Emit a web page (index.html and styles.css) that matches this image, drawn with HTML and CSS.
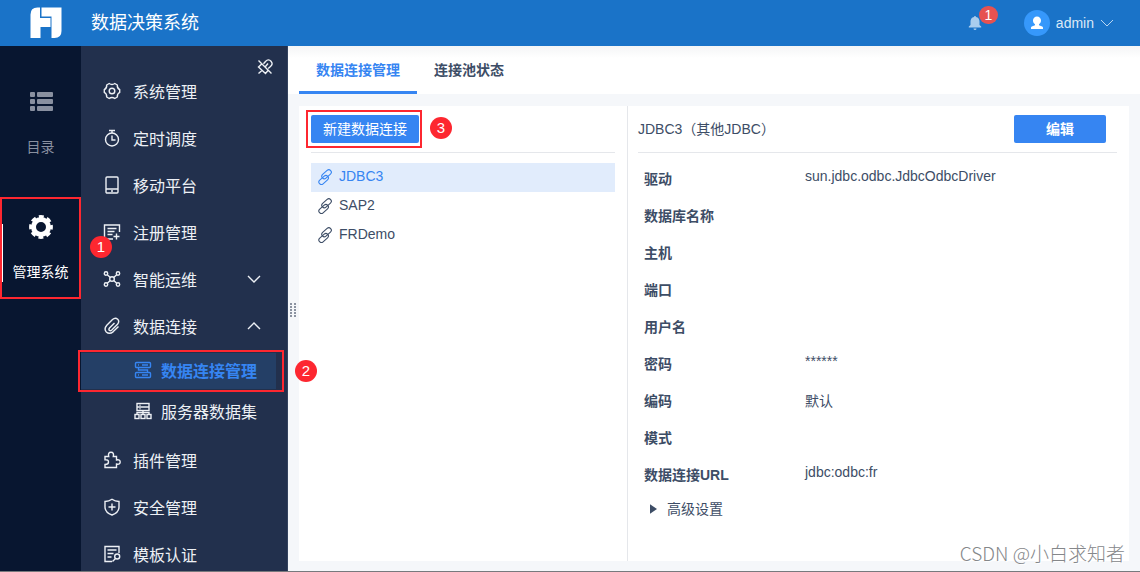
FILE: index.html
```html
<!DOCTYPE html>
<html lang="zh-CN">
<head>
<meta charset="utf-8">
<meta name="viewport" content="width=device-width, initial-scale=1">
<title>数据决策系统</title>
<link rel="stylesheet" href="styles.css">
</head>
<body>
<header class="topbar">
  <svg class="logo" viewBox="0 0 32 32" fill="#fff" aria-hidden="true"><path d="M7.500 0.500H10V11H20.500V20H10.500V31H0.500V7.500Q0.500 0.500 7.500 0.500Z"/><path d="M11.500 0.500H31.500V24Q31.500 31 24.500 31H21.500V9.500H11.500Z"/></svg>
  <h1 class="title">数据决策系统</h1>
  <button class="bell" type="button" aria-label="消息">
    <svg viewBox="0 0 14 14" width="14" height="14" fill="#aacdee" aria-hidden="true"><path d="M6 1a1 1 0 0 1 2 0c2.300.5 3.500 2.200 3.500 4.500v3.500l1.700 1.600v.9H.8v-.9L2.500 9V5.500C2.500 3.200 3.700 1.500 6 1zM5.500 12.500h3a1.500 1.500 0 0 1-3 0z"/></svg>
    <span class="count">1</span>
  </button>
  <button class="user" type="button">
    <svg viewBox="0 0 26 26" width="26" height="26" aria-hidden="true"><circle cx="13" cy="13" r="13" fill="#3698fb"/><path d="M13 6.500c2.300 0 4 1.700 4 4 0 1.600-.8 3-2 3.700v1l3.200 1.200q.8.400.8 1.300V19H7v-1.300q0-.9.800-1.300l3.200-1.200v-1c-1.200-.7-2-2.100-2-3.700 0-2.300 1.700-4 4-4z" fill="#fff"/></svg>
    <span>admin</span>
    <svg viewBox="0 0 14 14" width="14" height="14" fill="none" stroke="#b9d6f1" aria-hidden="true"><path d="M1 4l6 6 6-6"/></svg>
  </button>
</header>

<div class="shell">
  <nav class="rail" aria-label="主导航">
    <button class="rail-item" type="button">
      <svg viewBox="0 0 24 24" width="24" height="24" fill="#8990a0" aria-hidden="true"><rect x="1" y="2" width="5" height="5" rx="1"/><rect x="8" y="2" width="16" height="5" rx="1"/><rect x="1" y="9" width="5" height="5" rx="1"/><rect x="8" y="9" width="16" height="5" rx="1"/><rect x="1" y="16" width="5" height="5" rx="1"/><rect x="8" y="16" width="16" height="5" rx="1"/></svg>
      <span>目录</span>
    </button>
    <button class="rail-item current marked" type="button">
      <svg viewBox="0 0 24 24" width="24" height="24" fill="none" stroke="#fff" aria-hidden="true"><circle cx="12" cy="12" r="7.500" stroke-width="5"/><circle cx="12" cy="12" r="10.200" stroke-width="3.400" stroke-dasharray="4.800 3.211" stroke-dashoffset="2.400"/></svg>
      <span>管理系统</span>
    </button>
  </nav>

  <nav class="side" aria-label="管理系统">
    <button class="pin" type="button" aria-label="取消固定"><svg class="line" viewBox="0 0 16 16" width="16" height="16" aria-hidden="true"><path d="M1.500 1.500l13 13M6.500 4.800L8.500 2.500Q11.500-.5 14 2.200 16.500 5 13.500 7.500L11.200 9.500M4.700 5L1.500 8l7 6.500L11 11.500M5.200 11.200L1.500 14.500M11 4.500L8.500 7.500"/></svg></button>
    <ul class="menu">
      <li><a href="#"><svg class="line" viewBox="0 0 18 18" aria-hidden="true"><path d="M6.200 1.500Q9 3.500 11.800 1.500L14.300 3Q14 6.300 16.700 7.700V10.300Q14 11.700 14.300 15L11.800 16.500Q9 14.500 6.200 16.500L3.700 15Q4 11.700 1.300 10.300V7.700Q4 6.300 3.700 3Z"/><circle cx="9" cy="9" r="2.800"/></svg><span>系统管理</span></a></li>
      <li><a href="#"><svg class="line" viewBox="0 0 18 18" aria-hidden="true"><circle cx="9" cy="10.500" r="6.500"/><path d="M6 1.500h6M9 1.500V4M9 6.500v4.500h3.500"/></svg><span>定时调度</span></a></li>
      <li><a href="#"><svg class="line" viewBox="0 0 18 18" aria-hidden="true"><rect x="3" y="1" width="12" height="16" rx="1"/><path d="M3 13h12M8 15h2"/></svg><span>移动平台</span></a></li>
      <li><a href="#"><svg class="line" viewBox="0 0 18 18" aria-hidden="true"><path d="M16.500 9V2H1.500v14H10M4.500 5.500h9M4.500 8.500h7M4.500 11.500h5M13.500 10.500v6M10.500 13.500h6"/></svg><span>注册管理</span></a></li>
      <li><a href="#"><svg class="line" viewBox="0 0 18 18" aria-hidden="true"><circle cx="9" cy="9" r="2.300"/><circle cx="3" cy="3.500" r="1.700"/><circle cx="15" cy="3.500" r="1.700"/><circle cx="3" cy="14.500" r="1.700"/><circle cx="15" cy="14.500" r="1.700"/><path d="M4.300 4.700L7.300 7.500M13.700 4.700L10.700 7.500M4.300 13.300l3-2.800M13.700 13.300l-3-2.800"/></svg><span>智能运维</span><svg class="line arrow" viewBox="0 0 14 14" aria-hidden="true"><path d="M1 4l6 6 6-6"/></svg></a></li>
      <li><a href="#"><svg class="line" viewBox="0 0 18 18" aria-hidden="true"><path d="M11.500 6L6.500 11Q5.300 12.600 6.500 13.400 7.500 14.200 8.800 13L14.500 7.200Q16.800 4.300 14.700 2.200 12.200.2 9.500 2.600L3.800 8.300Q.6 12 3.300 15 6.500 17.800 10.300 14.600L15.500 9.500"/></svg><span>数据连接</span><svg class="line arrow" viewBox="0 0 14 14" aria-hidden="true"><path d="M1 10l6-6 6 6"/></svg></a>
        <ul class="submenu">
          <li class="sub-marked"><a class="active" href="#"><svg class="line" viewBox="0 0 18 18" aria-hidden="true"><rect x="1.500" y="1.500" width="15" height="5" rx="1"/><rect x="1.500" y="11.500" width="15" height="5" rx="1"/><path d="M4.500 6.500L4.500 9H13.500V11.500M4 4h1M8 4h6M4 14h1M8 14h6"/></svg><span>数据连接管理</span></a></li>
          <li><a href="#"><svg class="line" viewBox="0 0 18 18" aria-hidden="true"><rect x="3" y="1.500" width="12" height="7"/><path d="M3 5h12M5.500 3.300h1M5.500 6.800h1M9 8.500v4M3 12.500V10.500h12v2"/><rect x="1" y="12.500" width="4" height="4"/><rect x="7" y="12.500" width="4" height="4"/><rect x="13" y="12.500" width="4" height="4"/></svg><span>服务器数据集</span></a></li>
        </ul></li>
      <li><a href="#"><svg class="line" viewBox="0 0 18 18" aria-hidden="true"><path d="M2 5.500H5.700Q4.700 1.300 8 1.300T10.300 5.500H13.500V9Q17.200 8.200 17.200 11T13.500 13V16.500H2V13.500Q5.500 13.500 5.500 11T2 8.700Z"/></svg><span>插件管理</span></a></li>
      <li><a href="#"><svg class="line" viewBox="0 0 18 18" aria-hidden="true"><path d="M9 1.300Q12 3.500 16 3.500V9Q16 14.500 9 17 2 14.500 2 9V3.500Q6 3.500 9 1.300ZM9 5.500v7M5.500 9h7"/></svg><span>安全管理</span></a></li>
      <li><a href="#"><svg class="line" viewBox="0 0 18 18" aria-hidden="true"><path d="M16 8V1.500H2V16.500H9M4.500 5h9M4.500 8.500h6M4.500 12h4M12.500 13.500L9.500 16.500"/><circle cx="14.200" cy="11.500" r="2.500"/></svg><span>模板认证</span></a></li>
    </ul>
  </nav>

  <main class="content">
    <div class="tabs" role="tablist">
      <button class="tab selected" type="button" role="tab" aria-selected="true">数据连接管理</button>
      <button class="tab" type="button" role="tab" aria-selected="false">连接池状态</button>
    </div>
    <div class="panels">
      <section class="list-pane">
        <div class="pane-head"><div class="create"><button class="primary" type="button">新建数据连接</button></div></div>
        <ul class="connections">
          <li><a class="chosen" href="#"><svg class="line" viewBox="0 0 16 16" aria-hidden="true"><g transform="rotate(-42 8 8)"><rect x="5.500" y="4.500" width="11" height="5" rx="2.500"/><rect x="-.5" y="6.800" width="11" height="5" rx="2.500"/></g></svg>JDBC3</a></li>
          <li><a href="#"><svg class="line" viewBox="0 0 16 16" aria-hidden="true"><g transform="rotate(-42 8 8)"><rect x="5.500" y="4.500" width="11" height="5" rx="2.500"/><rect x="-.5" y="6.800" width="11" height="5" rx="2.500"/></g></svg>SAP2</a></li>
          <li><a href="#"><svg class="line" viewBox="0 0 16 16" aria-hidden="true"><g transform="rotate(-42 8 8)"><rect x="5.500" y="4.500" width="11" height="5" rx="2.500"/><rect x="-.5" y="6.800" width="11" height="5" rx="2.500"/></g></svg>FRDemo</a></li>
        </ul>
      </section>
      <section class="detail-pane">
        <div class="pane-head"><h2 class="name">JDBC3（其他JDBC）</h2><button class="primary edit" type="button">编辑</button></div>
        <dl class="props">
          <dt>驱动</dt><dd>sun.jdbc.odbc.JdbcOdbcDriver</dd>
          <dt>数据库名称</dt><dd></dd>
          <dt>主机</dt><dd></dd>
          <dt>端口</dt><dd></dd>
          <dt>用户名</dt><dd></dd>
          <dt>密码</dt><dd>******</dd>
          <dt>编码</dt><dd>默认</dd>
          <dt>模式</dt><dd></dd>
          <dt>数据连接URL</dt><dd>jdbc:odbc:fr</dd>
        </dl>
        <button class="advanced" type="button"><svg viewBox="0 0 6 8" width="7" height="10" fill="currentColor" aria-hidden="true"><path d="M0 0l6 4-6 4z"/></svg>高级设置</button>
      </section>
    </div>
    <span class="grip" aria-hidden="true"></span>
  </main>
</div>
<span class="step one">1</span>
<span class="step two">2</span>
<span class="step three">3</span>
<p class="watermark">CSDN @小白求知者</p>
</body>
</html>
```

FILE: styles.css
```css
* { box-sizing: border-box; }

body {
  position: relative;
  display: flex;
  flex-direction: column;
  height: 100vh;
  margin: 0;
  border-bottom: 1px solid #77797d;
  background: #f5f7fa;
  color: #3d4d66;
  font: 14px "Liberation Sans", "Noto Sans CJK SC", sans-serif;
}

button { padding: 0; border: 0; background: none; color: inherit; font: inherit; cursor: pointer; }
a { color: inherit; text-decoration: none; }
ul, dl, dd, h1, h2, p { margin: 0; padding: 0; list-style: none; }
svg { display: block; flex: none; }
.line { fill: none; stroke: currentColor; stroke-width: 1.4; }

.topbar {
  display: flex;
  flex: none;
  align-items: center;
  height: 46px;
  padding: 0 26px 0 30px;
  background: #1a73c8;
  color: #fff;
}
.logo { width: 32px; height: 32px; }
.title { margin-left: 29px; font-size: 18px; font-weight: 400; line-height: 24px; }
.bell { position: relative; margin-left: auto; }
.count {
  position: absolute;
  left: 11px;
  bottom: 6px;
  width: 19px;
  height: 18px;
  border-radius: 9px;
  background: #e65251;
  color: #fff;
  line-height: 18px;
}
.user { display: flex; align-items: center; gap: 6px; margin-left: 42px; color: #dbe9f7; }

.shell { display: flex; flex: 1; min-height: 0; }

.rail { flex: none; width: 81px; background: #081630; color: #8990a0; }
.rail-item {
  position: relative;
  display: flex;
  flex-direction: column;
  align-items: center;
  justify-content: center;
  gap: 23px;
  width: 100%;
  height: 102px;
  line-height: 20px;
}
.rail-item:first-child { margin: 26px 0 23px; }
.current { color: #fff; }
.marked { border: 2px solid #fd2730; }
.marked::before { content: ""; position: absolute; left: 0; top: 25px; width: 1px; height: 58px; background: #fff; }

.side {
  display: flex;
  flex: none;
  flex-direction: column;
  width: 207px;
  border-right: 1px solid #34435f;
  background: #22304d;
  color: #edf0f5;
  font-size: 16px;
}
.pin { align-self: flex-end; height: 16px; margin: 13px 14px 0; }
.menu {
  flex: 1;
  min-height: 0;
  margin: -8px 0 0 -3px;
  padding-left: 3px;
  overflow: hidden auto;
  scrollbar-width: none;
}
.menu a { display: flex; align-items: center; gap: 12px; height: 47px; padding: 0 26px 0 22px; }
.menu svg { width: 18px; height: 18px; }
.menu .arrow { width: 14px; height: 14px; margin-left: auto; }
.submenu { padding: 1px 0 4px; }
.submenu li { position: relative; display: flex; align-items: center; height: 41px; }
.submenu a { flex: 1; height: 36px; padding: 0 0 2px 53px; gap: 9px; }
.submenu .active { margin-right: 11px; background: #243f66; color: #3685f2; font-weight: 700; }
.sub-marked::after { content: ""; position: absolute; inset: 0 3px -1px -3px; border: 2px solid #fd2730; pointer-events: none; }

.content { position: relative; display: flex; flex: 1; flex-direction: column; min-width: 0; }
.tabs {
  display: flex;
  flex: none;
  height: 48px;
  padding-left: 11px;
  background: linear-gradient(#f4f5f6, #fff 12px);
}
.tab { padding: 0 17px; border-bottom: 3px solid transparent; font-weight: 700; }
.selected { border-color: #3685f2; color: #3685f2; }

.panels { display: flex; flex: 1; min-height: 0; margin: 12px 11px 10px; background: #fff; }
.list-pane { width: 329px; padding: 0 12px; border-right: 1px solid #e5e7eb; }
.detail-pane { flex: 1; min-width: 0; padding: 0 12px 0 10px; }
.pane-head {
  display: flex;
  align-items: center;
  justify-content: space-between;
  height: 47px;
  border-bottom: 1px solid #e5e7eb;
}
.create { margin-left: -5px; padding: 3px 1px 3px 3px; border: 2px solid #fd2730; }
.primary {
  display: block;
  width: 108px;
  height: 28px;
  border-radius: 2px;
  background: #3685f2;
  color: #fff;
  line-height: 26px;
}
.pane-head .edit { width: 92px; margin-right: 11px; font-weight: 700; }
.name { padding-bottom: 2px; font-size: 14px; font-weight: 400; }

.connections { padding-top: 10px; }
.connections a { display: flex; align-items: center; gap: 6px; height: 29px; padding: 0 6px 3px; }
.connections svg { width: 16px; height: 16px; margin-top: 2px; stroke-width: 1.1; }
.connections .chosen { background: #e1ecfc; color: #3685f2; }

.props {
  display: grid;
  grid-template-columns: 161px 1fr;
  grid-auto-rows: 37px;
  padding: 15px 6px 0;
}
.props dt { font-weight: 700; }
.advanced { display: flex; align-items: center; gap: 10px; margin: -2px 0 0 12px; line-height: 20px; }

.grip {
  position: absolute;
  left: 2px;
  top: 257px;
  width: 6px;
  height: 14px;
  background: radial-gradient(circle at 1px 1px, #8b93a1 1px, transparent 1px) 0 0 / 4px 3px;
}

.step {
  position: absolute;
  width: 22px;
  height: 22px;
  border-radius: 50%;
  background: #fd2730;
  color: #fff;
  font-size: 15px;
  line-height: 22px;
  text-align: center;
}
.one { left: 90px; top: 236px; }
.two { left: 295px; top: 360px; }
.three { left: 430px; top: 117px; }

.watermark {
  position: absolute;
  right: 15px;
  bottom: 4px;
  color: #85878a;
  font-family: "Noto Sans CJK SC", sans-serif;
  font-size: 19px;
  font-weight: 300;
  line-height: 28px;
  text-shadow: 1px 1px #fff;
}
```
